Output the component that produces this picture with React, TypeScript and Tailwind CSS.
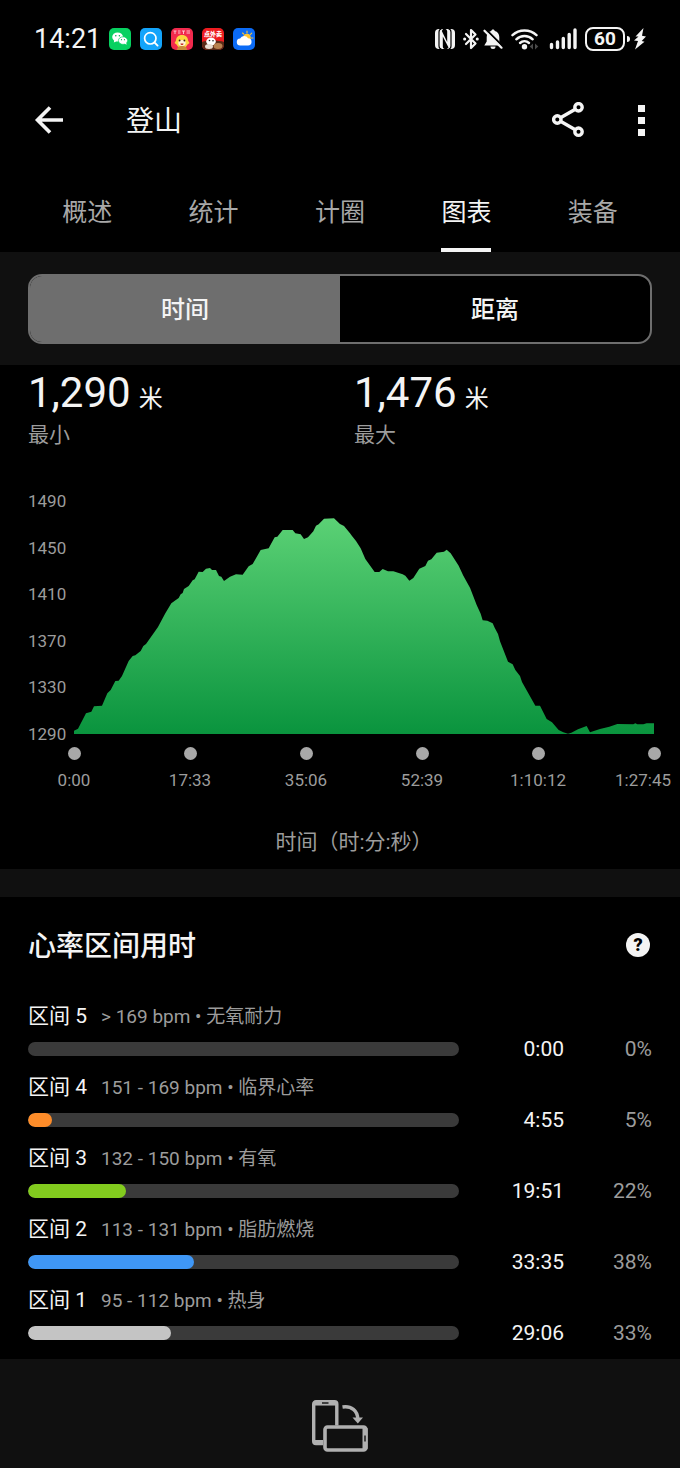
import { useState } from 'react';
import clsx from 'clsx';

type Point = [number, number];

interface Zone {
  name: string;
  range: string;
  time: string;
  percent: number;
  color: string;
}

const TABS = ['概述', '统计', '计圈', '图表', '装备'];
const MODES = ['时间', '距离'];

const ELEVATION_TICKS = ['1490', '1450', '1410', '1370', '1330', '1290'];
const TIME_TICKS = ['0:00', '17:33', '35:06', '52:39', '1:10:12', '1:27:45'];

const STATS = [
  { value: '1,290', unit: '米', label: '最小' },
  { value: '1,476', unit: '米', label: '最大' },
];

const ZONES: Zone[] = [
  { name: '区间 5', range: '> 169 bpm • 无氧耐力', time: '0:00', percent: 0, color: 'bg-red-600' },
  { name: '区间 4', range: '151 - 169 bpm • 临界心率', time: '4:55', percent: 5, color: 'bg-[#fd8c29]' },
  { name: '区间 3', range: '132 - 150 bpm • 有氧', time: '19:51', percent: 22, color: 'bg-[#82cb1e]' },
  { name: '区间 2', range: '113 - 131 bpm • 脂肪燃烧', time: '33:35', percent: 38, color: 'bg-[#3f97f6]' },
  { name: '区间 1', range: '95 - 112 bpm • 热身', time: '29:06', percent: 33, color: 'bg-[#c4c4c4]' },
];

const toSeconds = (time: string): number => {
  const [minutes, seconds] = time.split(':').map(Number);
  return minutes * 60 + seconds;
};

const TOTAL_SECONDS = ZONES.reduce((sum, zone) => sum + toSeconds(zone.time), 0);

// Elevation profile, x grows with time, y grows downwards to the 762 base line
const PROFILE: Point[] = [
  [0, 752], [12, 746], [36, 700], [52, 695], [60, 679], [84, 677], [100, 640], [110, 630], [124, 603], [134, 602],
  [144, 588], [164, 543], [176, 528], [184, 526], [200, 513], [208, 498], [216, 492], [252, 441], [274, 400], [292, 370],
  [314, 354], [320, 343], [326, 339], [330, 327], [344, 318], [356, 301], [362, 298], [374, 275], [386, 276], [396, 266],
  [408, 264], [414, 270], [426, 270], [435, 288], [442, 290], [450, 303], [468, 290], [486, 283], [506, 284], [524, 259],
  [536, 252], [560, 210], [584, 205], [602, 172], [610, 170], [626, 150], [656, 150], [664, 160], [680, 163], [690, 177],
  [702, 172], [718, 154], [726, 137], [734, 133], [750, 116], [780, 115], [798, 132], [810, 138], [828, 160], [834, 168],
  [846, 183], [860, 205], [874, 237], [902, 276], [916, 276], [926, 267], [942, 274], [958, 274], [986, 283], [994, 287],
  [1006, 302], [1018, 294], [1036, 266], [1054, 258], [1062, 242], [1072, 238], [1088, 218], [1110, 215], [1118, 209],
  [1130, 220], [1154, 257], [1168, 287], [1188, 323], [1208, 375], [1220, 401], [1226, 421], [1240, 422], [1256, 430],
  [1262, 443], [1272, 462], [1278, 484], [1302, 545], [1316, 553], [1324, 570], [1338, 588], [1344, 606], [1384, 677],
  [1398, 677], [1418, 717], [1434, 727], [1454, 750], [1468, 757], [1482, 761], [1492, 758], [1512, 748], [1538, 738],
  [1548, 757], [1578, 747], [1606, 740], [1630, 732], [1678, 733], [1684, 730], [1690, 733], [1708, 733], [1718, 730],
  [1740, 730],
];

function AppBadges() {
  return (
    <div className="flex gap-[9px]">
      <svg className="size-[22px]" viewBox="0 0 22 22">
        <rect width="22" height="22" rx="5" fill="#07d160" />
        <ellipse cx="8.6" cy="9" rx="5.4" ry="4.5" fill="#fff" />
        <path d="M5.4 12l-.6 2.6 2.8-1.4z" fill="#fff" />
        <ellipse cx="14" cy="12.6" rx="4.6" ry="3.8" fill="#fff" stroke="#07d160" strokeWidth=".7" />
        <path d="M15.4 15.6l2.2 1.2-.5-2.2z" fill="#fff" />
        <circle cx="6.8" cy="7.8" r=".8" fill="#07b050" />
        <circle cx="10.4" cy="7.8" r=".8" fill="#07b050" />
        <circle cx="12.5" cy="11.7" r=".6" fill="#07b050" />
        <circle cx="15.5" cy="11.7" r=".6" fill="#07b050" />
      </svg>
      <svg className="size-[22px]" viewBox="0 0 22 22">
        <rect width="22" height="22" rx="5" fill="#13a4fb" />
        <circle cx="10.3" cy="10.3" r="5.7" fill="none" stroke="#fff" strokeWidth="1.7" />
        <path d="M14.4 14.4l3.2 3.2" stroke="#fff" strokeWidth="1.9" strokeLinecap="round" />
      </svg>
      <svg className="size-[22px]" viewBox="0 0 22 22">
        <rect width="22" height="22" rx="5" fill="#f22a4d" />
        <path d="M2.5 3h3M4 3v3M7 3h2.5M7 5h2.5M11 3h3M12.5 3v3M15.5 3h3.5M15.5 5h3.5" stroke="#ffd0d8" strokeWidth=".9" />
        <path d="M11 7c4 0 6 2.5 6 5.5l1.500 2.500-2 1.500C15.500 19 13.500 20 11 20s-4.500-1-5.500-3.500l-2-1.500L5 12.500C5 9.500 7 7 11 7z" fill="#fcd441" />
        <path d="M6 22c0-3 2-4 5-4s5 1 5 4z" fill="#c98a3a" />
        <ellipse cx="11" cy="15" rx="3.7" ry="3" fill="#fff0d8" />
        <circle cx="8.6" cy="12.5" r=".9" fill="#33200f" />
        <circle cx="13.4" cy="12.5" r=".9" fill="#33200f" />
        <path d="M9.5 15.5h3c0 2-3 2-3 0z" fill="#c02a20" />
      </svg>
      <svg className="size-[22px]" viewBox="0 0 22 22">
        <rect width="22" height="22" rx="5" fill="#ee1c20" />
        <path d="M0 14c5-2 17-2 22 0v3a5 5 0 0 1-5 5H5a5 5 0 0 1-5-5z" fill="#5a2a18" />
        <text x="11" y="7.5" textAnchor="middle" fontSize="6" fontWeight="900" fill="#fff">点外卖</text>
        <ellipse cx="9" cy="13.5" rx="4.8" ry="4" fill="#fff" />
        <ellipse cx="16" cy="18" rx="4.5" ry="3" fill="#b88150" />
        <ellipse cx="7" cy="18.5" rx="4" ry="2.5" fill="#e9ddd2" />
        <circle cx="7.5" cy="12.5" r=".8" fill="#222" />
        <circle cx="11" cy="12.8" r=".8" fill="#222" />
      </svg>
      <svg className="size-[22px]" viewBox="0 0 22 22">
        <rect width="22" height="22" rx="5" fill="#0b6bf6" />
        <path d="M14 3v2M18.7 5.200l-1.200 1.200M20 10h-1.500M9.600 5l1.200 1.200" stroke="#ffc530" strokeWidth="1.1" strokeLinecap="round" />
        <circle cx="14" cy="9.5" r="3.8" fill="#ffc530" />
        <path d="M7.500 17.500a3.500 3.500 0 0 1-.4-7 4.500 4.500 0 0 1 8-.2 3.600 3.600 0 0 1-.3 7.200z" fill="#fff" />
      </svg>
    </div>
  );
}

function StatusIcons() {
  return (
    <div className="flex items-center text-[#f4f4f4]">
      <svg className="h-5 w-5" viewBox="0 0 20 20">
        <rect width="20" height="20" rx="4" fill="currentColor" />
        <path d="M6.500 0c-2 .2-2.500 1-2.500 3v14c0 2 .5 2.800 2.500 3M13.500 0c2 .2 2.500 1 2.500 3v14c0 2-.5 2.800-2.500 3" fill="none" stroke="#000" strokeWidth="1.2" />
        <path d="M7.800 7.500L13.500 18.500 12 20H9.500C8.200 19.500 7.800 18.500 7.800 17z" fill="#000" />
        <path d="M12.200 13L6.800 2 8 0h2.500C11.800.500 12.200 1.500 12.200 3z" fill="#000" />
      </svg>
      <svg className="ml-2 h-[22px] w-4" viewBox="0 0 16 22" fill="none" stroke="currentColor" strokeWidth="2.2" strokeLinejoin="round" strokeLinecap="round">
        <path d="M3 6l9.500 9.500L8 20v-18l4.500 4.500L3 16" />
        <path d="M1.600 11h.1M14.200 11h.1" strokeWidth="3" />
      </svg>
      <svg className="ml-1 h-[22px] w-5" viewBox="0 0 20 22">
        <path d="M10 1.500c1 0 1.600.6 1.800 1.500 2.900.8 4.500 3 4.500 6v4.500l2.400 4H1.300l2.400-4V9c0-3 1.600-5.200 4.500-6 .2-.9.800-1.500 1.800-1.500z" fill="currentColor" />
        <path d="M7.500 18.600h5a2.500 2.500 0 0 1-5 0z" fill="currentColor" />
        <path d="M2.700 1.200l18 18" stroke="#000" strokeWidth="2" />
        <path d="M1.500 2.700l17 17" stroke="currentColor" strokeWidth="2.200" strokeLinecap="round" />
      </svg>
      <svg className="ml-2 h-[22px] w-7" viewBox="0 0 28 22" fill="none" stroke="currentColor" strokeWidth="2.4" strokeLinecap="round">
        <path d="M1.500 7.200a17.500 17.500 0 0 1 24 0" />
        <path d="M5.300 11.300a12 12 0 0 1 16.400 0" />
        <path d="M9 15a6.700 6.700 0 0 1 9 0" />
        <circle cx="13.5" cy="18.7" r="2.7" fill="currentColor" stroke="none" />
        <path d="M22 15.500v6L18.700 18.500zM24 15.500v6l3.300-3z" fill="#4a4a4a" stroke="none" />
      </svg>
      <svg className="ml-2.5 h-[22px] w-7" viewBox="0 0 28 22" stroke="currentColor" strokeWidth="3.4" strokeLinecap="round">
        <path d="M2.500 16.500v3M8.500 14v5.500M14.300 10.500v9M20.200 6.500v13M26 2v17.500" />
      </svg>
      <span className="ml-2 flex h-6 w-10 items-center justify-center rounded-lg border-2 border-current text-[19px] leading-5 font-bold">60</span>
      <span className="ml-0.5 h-1.5 w-[3px] rounded-r-sm bg-current" />
      <svg className="ml-1 h-6 w-3" viewBox="0 0 12 24" fill="currentColor">
        <path d="M9.500 1L1.500 9.500h3L0 13.500l4 .5L1 22.500l9.500-7.800-2.800-.7L12 9.500 8 8.800z" />
      </svg>
    </div>
  );
}

function StatusBar() {
  return (
    <div className="flex h-[78px] items-center justify-between px-[34px]">
      <div className="flex items-center gap-2">
        <span className="text-[27px] leading-8">14:21</span>
        <AppBadges />
      </div>
      <StatusIcons />
    </div>
  );
}

function TopBar() {
  return (
    <header className="flex h-[84px] items-center pr-[22px] pl-[34px]">
      <button type="button" aria-label="返回">
        <svg className="h-7 w-[30px]" viewBox="0 0 30 28" fill="none" stroke="#f4f4f4" strokeWidth="3.6">
          <path d="M29 14H4M16 1.500L3.500 14 16 26.500" />
        </svg>
      </button>
      <h1 className="ml-[62px] flex-1 pt-1 text-[28px] leading-9">登山</h1>
      <button type="button" aria-label="分享">
        <svg className="h-9 w-8" viewBox="0 0 32 36" fill="none" stroke="#f4f4f4" strokeWidth="3.4">
          <circle cx="5.3" cy="17.5" r="3.7" />
          <circle cx="26.5" cy="5.3" r="3.7" />
          <circle cx="26.5" cy="29.700" r="3.7" />
          <path d="M8.500 15.700L23.300 7.200M8.500 19.300l14.800 8.500" />
        </svg>
      </button>
      <button type="button" aria-label="更多" className="ml-10 flex w-[34px] flex-col items-center gap-[5px]">
        <span className="size-[7px] bg-[#f4f4f4]" />
        <span className="size-[7px] bg-[#f4f4f4]" />
        <span className="size-[7px] bg-[#f4f4f4]" />
      </button>
    </header>
  );
}

function ElevationChart() {
  const line = PROFILE.map((point) => point.join(' ')).join('L');

  return (
    <div className="pl-7">
      <div className="flex pr-[26px]">
        <div className="flex w-[46px] shrink-0 flex-col justify-between">
          {ELEVATION_TICKS.map((tick) => (
            <span key={tick} className="text-[17px] leading-5 text-[#9c9c9c]">{tick}</span>
          ))}
        </div>
        <div className="min-w-0 flex-1 py-2.5">
          <svg className="h-[233px] w-full" viewBox="0 63 1740 699" preserveAspectRatio="none" role="img" aria-label="海拔">
            <defs>
              <linearGradient id="elevation" gradientUnits="userSpaceOnUse" x1="0" y1="115" x2="0" y2="762">
                <stop offset="0" stopColor="#5bd175" />
                <stop offset="1" stopColor="#0a943e" />
              </linearGradient>
            </defs>
            <path d={`M0 762L${line}L1740 762z`} fill="url(#elevation)" />
          </svg>
        </div>
      </div>
      <div className="mt-[3px] mr-[26px] ml-[46px] flex justify-between">
        {TIME_TICKS.map((tick) => (
          <div key={tick} className="group flex w-0 flex-col items-center gap-2.5">
            <span className="size-[13px] shrink-0 rounded-full bg-[#a8a8a8]" />
            <span className="text-[17px] leading-5 whitespace-nowrap text-[#9c9c9c] group-last:pr-[22px]">{tick}</span>
          </div>
        ))}
      </div>
      <p className="mt-[37px] text-center text-[21px] leading-[30px] text-[#9c9c9c]">时间（时:分:秒）</p>
    </div>
  );
}

function ZoneRow({ zone }: { zone: Zone }) {
  const share = (toSeconds(zone.time) / TOTAL_SECONDS) * 100;

  return (
    <li className="flex h-[71px] flex-col">
      <div className="flex items-baseline leading-7">
        <span className="w-[73px] text-[21px] whitespace-nowrap">{zone.name}</span>
        <span className="text-[19px] text-[#9c9c9c]">{zone.range}</span>
      </div>
      <div className="mt-1 flex h-7 items-center text-[21px] leading-7">
        <div className="h-3.5 flex-1 overflow-hidden rounded-full bg-[#3a3a3a]" role="progressbar" aria-label={zone.name} aria-valuenow={zone.percent}>
          <div className={clsx('h-full rounded-full', zone.color)} style={{ width: `${share}%` }} />
        </div>
        <span className="w-[105px] text-right">{zone.time}</span>
        <span className="w-[88px] text-right text-[#9c9c9c]">{zone.percent}%</span>
      </div>
    </li>
  );
}

export default function App() {
  const [tab, setTab] = useState('图表');
  const [mode, setMode] = useState('时间');

  return (
    <div className="flex min-h-screen flex-col bg-black font-['Roboto','Noto_Sans_CJK_SC',sans-serif] text-[#f4f4f4]">
      <StatusBar />
      <TopBar />

      <nav className="flex h-[90px] px-6">
        {TABS.map((item) => (
          <button key={item} type="button" onClick={() => setTab(item)} className="flex flex-1 justify-center">
            <span
              className={clsx(
                'flex h-full items-center border-b-4 pt-4 text-[25px] leading-9',
                item === tab ? 'border-[#f4f4f4]' : 'border-transparent text-[#a8a8a8]',
              )}
            >
              {item}
            </span>
          </button>
        ))}
      </nav>

      <div className="bg-[#101010] px-7 pt-[22px] pb-[21px]">
        <div className="flex h-[70px] overflow-hidden rounded-[14px] border-2 border-[#6e6e6e] bg-black">
          {MODES.map((item) => (
            <button
              key={item}
              type="button"
              aria-pressed={item === mode}
              onClick={() => setMode(item)}
              className={clsx('flex-1 pt-0.5 text-2xl font-medium', item === mode && 'bg-[#6e6e6e]')}
            >
              {item}
            </button>
          ))}
        </div>
      </div>

      <section className="pb-3">
        <dl className="grid grid-cols-2 pt-0.5 pl-7">
          {STATS.map((stat) => (
            <div key={stat.label} className="flex flex-col-reverse gap-0.5">
              <dt className="text-[21px] leading-7 text-[#9c9c9c]">{stat.label}</dt>
              <dd className="flex items-baseline gap-2 text-[42px] leading-[52px]">
                {stat.value}
                <span className="text-2xl">{stat.unit}</span>
              </dd>
            </div>
          ))}
        </dl>
        <div className="pt-[42px]">
          <ElevationChart />
        </div>
      </section>

      <div className="h-7 bg-[#101010]" />

      <section className="px-7 pb-0.5">
        <div className="flex h-24 items-center justify-between pr-0.5">
          <h2 className="pt-1 text-[28px] leading-9 font-medium">心率区间用时</h2>
          <button type="button" aria-label="帮助" className="size-6 rounded-full bg-[#f4f4f4] text-lg leading-6 font-black text-black">?</button>
        </div>
        <ul className="pt-[9px]">
          {ZONES.map((zone) => (
            <ZoneRow key={zone.name} zone={zone} />
          ))}
        </ul>
      </section>

      <footer className="flex flex-1 justify-center bg-[#101010] pt-[41px] pb-4">
        <button type="button" aria-label="旋转屏幕" className="h-[52px]">
          <svg className="h-[52px] w-14" viewBox="0 0 56 52" fill="none" stroke="#b0b0b0">
            <path d="M11 43.500H4a2.300 2.300 0 0 1-2.300-2.300V4A2.300 2.300 0 0 1 4 1.700h18.500A2.300 2.300 0 0 1 24.800 4v21.500" strokeWidth="3.4" />
            <path d="M2 3.300h22.500" strokeWidth="4.5" />
            <path d="M10 3h6.500" stroke="#333" strokeWidth="1.8" />
            <path d="M2 42.500h9" strokeWidth="5" />
            <rect x="13" y="27" width="41" height="23" rx="2.5" strokeWidth="3.6" />
            <path d="M53 28v21" strokeWidth="5" />
            <path d="M53 35.500v6" stroke="#333" strokeWidth="1.8" />
            <path d="M30.500 7c9-1.500 15 4 15.300 12" strokeWidth="3.4" />
            <path d="M40.500 17.500h10.500l-5.200 6z" fill="#b0b0b0" stroke="none" />
          </svg>
        </button>
      </footer>
    </div>
  );
}
